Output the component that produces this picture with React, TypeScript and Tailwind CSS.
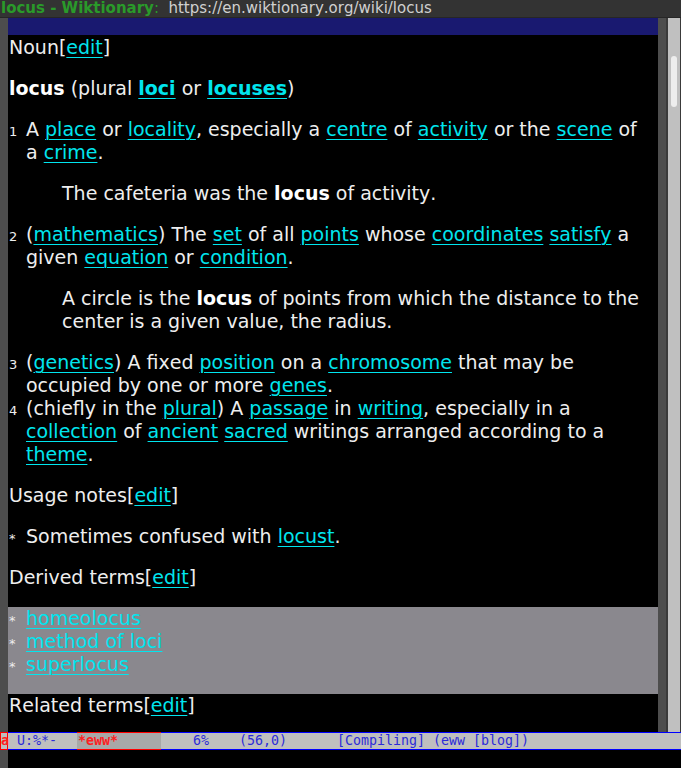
import React from "react";

const L = ({ children, b }: { children: React.ReactNode; b?: boolean }) => (
  <span className={`text-[#00e5ee] underline decoration-1 underline-offset-[3px] ${b ? "font-bold" : ""}`}>{children}</span>
);

const B = ({ children }: { children: React.ReactNode }) => <span className="font-bold text-white">{children}</span>;

const Line = ({ children, className = "" }: { children?: React.ReactNode; className?: string }) => (
  <div className={`h-[23px] leading-[23px] whitespace-pre ${className}`}>{children}</div>
);

const Gap = () => <div className="h-[18px]" />;

const Num = ({ n }: { n: string }) => <span className="inline-block w-[17px] text-[13px]">{n}</span>;

const Edit = () => (
  <>
    [<L>edit</L>]
  </>
);

export default function App() {
  return (
    <div className="flex h-[768px] w-[681px] flex-col overflow-hidden bg-black font-['DejaVu_Sans',sans-serif] [font-kerning:none]">
      {/* frame title */}
      <div className="flex h-[18px] items-center whitespace-pre border-b border-[#262626] bg-[#333333] pl-[1px] text-[15px] leading-[17px]">
        <span className="font-bold text-[#2a9a2a]">locus - Wiktionary</span>
        <span className="text-[#2a9a2a]">:</span>
        <span className="text-[#d0d0d0]">  https://en.wiktionary.org/wiki/locus</span>
      </div>

      <div className="flex h-[714px]">
        <div className="w-[8px] bg-[#4d4d4d]" />
        <div className="flex w-[650px] flex-col">
          <div className="h-[17px] bg-[#191970]" />
          <div className="pt-[1px] text-[19px] text-[#eeeeee]">
            <div className="pl-[1px]">
              <Line>
                Noun<Edit />
              </Line>
              <Gap />
              <Line>
                <B>locus</B> (plural <L b>loci</L> or <L b>locuses</L>)
              </Line>
              <Gap />
              <Line>
                <Num n="1" />A <L>place</L> or <L>locality</L>, especially a <L>centre</L> of <L>activity</L> or the <L>scene</L> of
              </Line>
              <Line className="pl-[17px]">
                a <L>crime</L>.
              </Line>
              <Gap />
              <Line className="pl-[53px]">
                The cafeteria was the <B>locus</B> of activity.
              </Line>
              <Gap />
              <Line>
                <Num n="2" />(<L>mathematics</L>) The <L>set</L> of all <L>points</L> whose <L>coordinates</L> <L>satisfy</L> a
              </Line>
              <Line className="pl-[17px]">
                given <L>equation</L> or <L>condition</L>.
              </Line>
              <Gap />
              <Line className="pl-[53px]">
                A circle is the <B>locus</B> of points from which the distance to the
              </Line>
              <Line className="pl-[53px]">center is a given value, the radius.</Line>
              <Gap />
              <Line>
                <Num n="3" />(<L>genetics</L>) A fixed <L>position</L> on a <L>chromosome</L> that may be
              </Line>
              <Line className="pl-[17px]">
                occupied by one or more <L>genes</L>.
              </Line>
              <Line>
                <Num n="4" />(chiefly in the <L>plural</L>) A <L>passage</L> in <L>writing</L>, especially in a
              </Line>
              <Line className="pl-[17px]">
                <L>collection</L> of <L>ancient</L> <L>sacred</L> writings arranged according to a
              </Line>
              <Line className="pl-[17px]">
                <L>theme</L>.
              </Line>
              <Gap />
              <Line>
                Usage notes<Edit />
              </Line>
              <Gap />
              <Line>
                <Num n="*" />Sometimes confused with <L>locust</L>.
              </Line>
              <Gap />
              <Line>
                Derived terms<Edit />
              </Line>
              <Gap />
            </div>
            <div className="bg-[#8a888e] pl-[1px]">
              <Line>
                <Num n="*" />
                <L>homeolocus</L>
              </Line>
              <Line>
                <Num n="*" />
                <L>method of loci</L>
              </Line>
              <Line>
                <Num n="*" />
                <L>superlocus</L>
              </Line>
              <Gap />
            </div>
            <div className="pl-[1px]">
              <Line>
                Related terms<Edit />
              </Line>
            </div>
          </div>
        </div>
        <div className="w-[8px] bg-[#4d4d4d]" />
        <div className="w-[2px] bg-[#3a3a3a]" />
        <div className="w-[12px] bg-[#c0c0c0] pl-[3px] pt-[38px]">
          <div className="h-[51px] w-[6px] rounded-full bg-[#ededed]" />
        </div>
        <div className="w-[1px] bg-[#3a3a3a]" />
      </div>

      {/* mode line */}
      <div className="flex h-[18px] items-stretch whitespace-pre border-y border-[#0000ff] bg-[#bfbfbf] font-['DejaVu_Sans_Mono',monospace] text-[13.3px] leading-[16px] text-[#2c2cd8]">
        <span className="-my-[1px] w-[8px] border border-[#ff0000] text-center font-bold leading-[16px] text-[#ff2020]">a</span>
        <span className="w-[69px] pl-[9px]">U:%*-</span>
        <span className="-my-[1px] w-[84px] border-y border-[#ff0000] bg-[#a8a8a8] pl-[1px] font-bold leading-[16px] text-[#ff2020]">*eww*</span>
        <span className="w-[46px] pl-[32px]">6%</span>
        <span className="w-[130px] pl-[32px]">(56,0)</span>
        <span>[Compiling] (eww [blog])</span>
      </div>

      {/* minibuffer */}
      <div className="flex h-[18px]">
        <div className="w-[8px] bg-[#4d4d4d]" />
      </div>
    </div>
  );
}
